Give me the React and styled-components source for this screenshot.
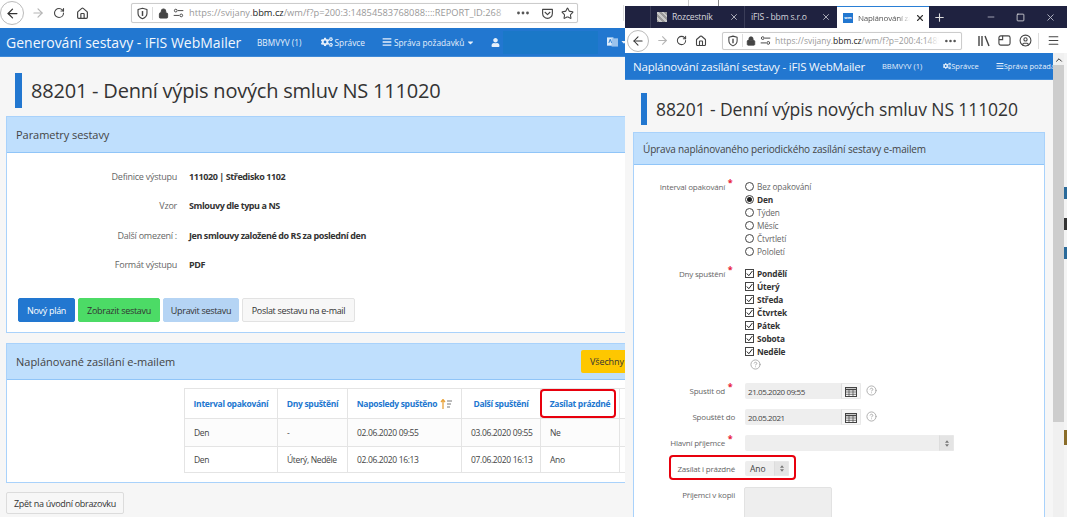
import React from "react";
import styled, { createGlobalStyle } from "styled-components";
import { ArrowLeft, ArrowRight, RotateCw, House, Lock, Star, Minus, Plus, X, Square, Menu, CircleHelp, CircleUser, ChevronUp } from "lucide-react";
import { FaCogs, FaBars, FaUser, FaCaretDown } from "react-icons/fa";

const Global = createGlobalStyle`
  html, body { margin: 0; padding: 0; background: #fff; }
  body { font-family: "Open Sans", "Noto Sans", sans-serif; color: #333; overflow: hidden; }
  * { box-sizing: border-box; }
`;

const Desktop = styled.div`display: flex; width: 1067px; height: 517px; overflow: hidden;`;
const Win = styled.section`
  position: relative; width: ${p => p.$w}px; flex: none; height: 517px; overflow: hidden; display: flex; flex-direction: column; background: #fff;
`;
const TopStrip = styled.div`
  height: 6px; flex: none; display: flex; padding-left: 63px; gap: 29px; background: #fff;
  i { width: 1px; height: 6px; background: #888; }
  i:first-child { background: #ccc; }
`;
const TabBar = styled.div`height: 22px; flex: none; display: flex; background: #1f2240; color: #ddd; font-size: 9px; padding-left: 25px; align-items: stretch;`;
const Tab = styled.div`
  width: ${p => p.$w}px; flex: none; display: flex; align-items: center; gap: 5px; padding-left: ${p => p.$pl}px; position: relative;
  border-left: ${p => p.$active ? 0 : "1px solid #3a3d58"};
  background: ${p => p.$active ? "#fff" : "transparent"};
  color: ${p => p.$active ? "#555" : "#d5d6dd"};
  border-top: ${p => p.$active ? "1px solid #2a7fd5" : 0};
  white-space: nowrap; overflow: hidden;
  letter-spacing: -0.2px; font-size: ${p => p.$active ? 8 : 8.6}px;
`;
const TabLabel = styled.span`
  overflow: hidden; width: ${p => p.$w}px; flex: none;
  mask-image: linear-gradient(to right, #000 78%, transparent);
`;
const TabClose = styled.span`margin-left: auto; margin-right: ${p => p.$mr}px; display: flex; color: ${p => p.$active ? "#333" : "#c5c6d0"};`;
const GreyFav = styled.span`
  width: 10px; height: 10px; flex: none; background: #aaa repeating-linear-gradient(45deg, #999 0 2px, #c8c8c8 2px 4px);
`;
const BlueFav = styled.span`
  width: 10px; height: 10px; flex: none; background: #2277d0; color: #fff; font-size: 4px; font-weight: 700; line-height: 10px; text-align: center; letter-spacing: 0;
`;
const WinCtl = styled.div`display: flex; align-items: center; margin-left: 4px; height: 100%;`;
const CtlBtn = styled.span`width: ${p => p.$w}px; margin-left: ${p => p.$ml || 0}px; display: flex; justify-content: center; color: ${p => p.$c || "#b8bac8"};`;

const Toolbar = styled.div`
  height: ${p => p.$h}px; flex: none; display: flex; align-items: center; background: #fff; color: #444; padding-bottom: ${p => p.$pb || 0}px;
`;
const BackBtn = styled.span`
  width: ${p => p.$s}px; height: ${p => p.$s}px; flex: none; border: 1px solid #bbb; border-radius: 50%; display: flex; align-items: center; justify-content: center; color: #333; margin-left: ${p => p.$ml}px; background: #fff;
`;
const Tool = styled.span`display: flex; flex: none; justify-content: center; width: ${p => p.$w}px; margin-left: ${p => p.$ml || 0}px; color: ${p => p.$c || "#444"};`;
const UrlBar = styled.div`
  display: flex; align-items: center; flex: none; width: ${p => p.$w}px; height: ${p => p.$h}px; margin-left: ${p => p.$ml}px;
  border: 1px solid #ccc; border-radius: 2px; background: #fff; box-shadow: 0 0 1px #ddd;
`;
const UrlDivider = styled.i`width: 1px; height: 13px; background: #ddd; flex: none;`;
const UrlText = styled.div`
  flex: 1; min-width: 0; margin-left: ${p => p.$ml}px; overflow: hidden; white-space: nowrap; font-size: ${p => p.$fs}px; color: #999; position: relative; line-height: 14px;
  b { font-weight: 400; color: #222; }
  &::after { content: ""; position: absolute; right: 0; top: 0; bottom: 0; width: 14px; background: linear-gradient(to right, transparent, #fff); }
`;
const ToolRule = styled.i`width: 1px; height: 16px; background: #ddd; flex: none; margin-left: ${p => p.$ml}px;`;

const Nav = styled.nav`
  height: ${p => p.$h}px; flex: none; display: flex; align-items: center; background: #2277d0; color: #fff; font-size: ${p => p.$fs}px; white-space: nowrap; overflow: hidden; padding-left: ${p => p.$pl}px; border-bottom: 1px solid #3f8ad8;
`;
const Brand = styled.div`font-size: ${p => p.$fs}px; letter-spacing: ${p => p.$ls || 0}px; color: #f2f7fd; width: ${p => p.$w}px; flex: none; white-space: nowrap;`;
const NavItem = styled.div`display: flex; align-items: center; gap: ${p => p.$gap ?? 2}px; flex: none; margin-left: ${p => p.$ml}px; color: #e6f0fb;`;
const Redaction = styled.div`width: 95px; height: 23px; flex: none; background: #1a78c8; margin-left: 3px;`;

const Page = styled.main`flex: 1; min-height: 0; background: #f6f6f6; overflow: hidden; padding: ${p => p.$pad};`;
const Heading = styled.h1`
  margin: 0 0 0 ${p => p.$ml}px; font-weight: 400; color: #333; border-left: ${p => p.$bw}px solid #2277d0; height: ${p => p.$h}px; line-height: ${p => p.$h}px; padding-left: ${p => p.$pl}px; font-size: ${p => p.$fs}px; white-space: nowrap; letter-spacing: ${p => p.$ls}px;
`;
const Card = styled.section`
  width: ${p => p.$w}px; background: #fff; border: 1px solid #a9d2fb; margin-top: ${p => p.$mt}px; flex: none;
`;
const CardHead = styled.header`
  height: ${p => p.$h}px; background: #bfdffd; border-bottom: 1px solid #90c5f8; display: flex; align-items: center; padding-left: ${p => p.$pl}px; font-size: ${p => p.$fs}px; color: #444; white-space: nowrap; letter-spacing: ${p => p.$ls || 0}px;
`;
const AllBtn = styled.span`
  margin-left: auto; margin-right: 14px; background: #fec700; border-radius: 2px; height: 23px; width: 70px; display: flex; align-items: center; padding-left: 9px; font-size: 9px; color: #333; letter-spacing: -0.1px;
`;
const ParamBody = styled.div`padding: 9px 11px 10px 11px;`;
const ParamRow = styled.div`display: flex; align-items: center; height: 29.3px; font-size: 9px;`;
const ParamLabel = styled.div`width: 159px; flex: none; text-align: right; color: #666; letter-spacing: -0.25px;`;
const ParamValue = styled.div`margin-left: 12px; font-weight: 700; color: #333; letter-spacing: -0.42px;`;
const BtnRow = styled.div`display: flex; gap: 3px; margin-top: 19px;`;
const Btn = styled.span`
  height: ${p => p.$h || 24}px; width: ${p => p.$w}px; display: flex; align-items: center; justify-content: center; font-size: 9px; border-radius: 2px; letter-spacing: -0.3px;
  background: ${p => p.$bg}; color: ${p => p.$c || "#333"}; border: 1px solid ${p => p.$bd || p.$bg};
`;
const BackLink = styled(Btn)`margin-top: 9px;`;

const TableWrap = styled.div`padding: 8px 0 9px 177px;`;
const Table = styled.table`
  border-collapse: collapse; table-layout: fixed; width: 520px; font-size: 8.5px; background: #fff; color: #444;
  th, td { border: 1px solid #e4e4e4; white-space: nowrap; overflow: hidden; }
  th { height: 30px; color: #2277d0; font-weight: 700; text-align: center; padding: 0; letter-spacing: -0.3px; }
  td { padding: 0 0 0 9px; letter-spacing: -0.35px; }
  tbody tr { height: 28px; background: #fcfcfc; }
  tbody tr:last-child { height: 26px; background: #fff; }
`;
const SortIcon = styled.svg`vertical-align: -2px; margin-left: 3px;`;
const Ring = styled.span`
  position: absolute; border: 2px solid #e8000d; border-radius: 4px; pointer-events: none; left: ${p => p.$l}px; top: ${p => p.$t}px; width: ${p => p.$w}px; height: ${p => p.$h}px;
`;

const ContentRow = styled.div`flex: 1; min-height: 0; display: flex;`;
const Content = styled.div`flex: 1; min-width: 0; display: flex; flex-direction: column;`;
const Scrollbar = styled.div`width: 11px; flex: none; background: #f0f0f0; display: flex; flex-direction: column; align-items: center; color: #333;`;
const ArrowUp = styled(ChevronUp)`margin-top: 2px; flex: none;`;
const Thumb = styled.div`width: 100%; height: 357px; margin-top: 0; background: #cdcdcd;`;
const Sliver = styled.div`
  width: 3px; flex: none; background: linear-gradient(to bottom, #f4f4f4 0 134px, #2a6a9a 134px 146px, #f4f4f4 146px 165px, #333 165px 177px, #f4f4f4 177px 194px, #2a6a9a 194px 206px, #f4f4f4 206px 377px, #8a6d2a 377px 392px, #f4f4f4 392px);
`;

const Form = styled.div`padding: 15px 0 0 0; display: flex; flex-direction: column;`;
const Row = styled.div`display: flex; align-items: flex-start; margin-bottom: ${p => p.$mb ?? 10}px; position: relative;`;
const Label = styled.div`
  width: 111px; flex: none; text-align: right; padding-right: 10px; color: #666; white-space: nowrap; font-size: 8px; letter-spacing: -0.2px; line-height: ${p => p.$lh}px;
`;
const Req = styled.span`display: inline-block; width: 10px; color: #e8203a; font-weight: 700; font-size: 9px; text-align: center; position: relative; top: -4px; line-height: 0;`;
const Stack = styled.div`display: flex; flex-direction: column;`;
const Choice = styled.label`display: flex; align-items: center; height: 13px; gap: 3px; font-size: 8.3px; letter-spacing: -0.15px; color: ${p => p.$on ? "#333" : "#666"}; font-weight: ${p => p.$on ? 700 : 400};`;
const Radio = styled.span`
  width: 9px; height: 9px; flex: none; border: 1px solid #444; border-radius: 50%; background: #fff; display: flex; align-items: center; justify-content: center; margin-top: -1px;
  &::after { content: ""; width: 5px; height: 5px; border-radius: 50%; background: ${p => p.$on ? "#222" : "transparent"}; }
`;
const Check = styled.span`width: 9px; height: 9px; flex: none; border: 1px solid #444; background: #fff; display: flex; margin-top: -1px;`;
const HelpLine = styled.div`height: 13px; display: flex; padding-left: 5px; color: #aaa; align-items: center;`;
const Field = styled.div`
  display: flex; height: ${p => p.$h || 16}px; width: ${p => p.$w}px; background: #eee; border-radius: 2px; color: #444; align-items: center; flex: none; overflow: hidden;
`;
const FieldText = styled.span`flex: 1; padding-left: ${p => p.$pl || 3}px; letter-spacing: ${p => p.$ls ?? -0.4}px; white-space: nowrap; font-size: ${p => p.$fs || 8}px;`;
const Addon = styled.span`
  width: ${p => p.$w}px; height: 100%; flex: none; background: ${p => p.$bg}; display: flex; align-items: center; justify-content: center; color: #555; border: 1px solid #e8e8e8; border-left: 1px solid #ddd;
`;
const Help = styled.span`display: flex; margin-left: 5px; color: #aaa; margin-top: 2px;`;
const TextBox = styled.div`width: 88px; height: 40px; background: #eee; border: 1px solid #e2e2e2; border-radius: 2px; margin-left: -1px;`;

function PocketIcon({ s = 13 }) {
  return <svg width={s} height={s} viewBox="0 0 16 16" fill="none" stroke="currentColor" strokeWidth="1.4"><path d="M2 3h12v5a6 6 0 0 1-12 0z" strokeLinejoin="round" /><path d="M5 6.5l3 2.8 3-2.8" strokeLinecap="round" strokeLinejoin="round" /></svg>;
}
function ShieldIcon({ s = 13 }) {
  return <svg width={s} height={s} viewBox="0 0 16 16" fill="none" stroke="currentColor" strokeWidth="1.4"><path d="M8 1.5l5.5 1.6v4.6c0 3.4-2.6 5.6-5.5 6.8C5.100 13.300 2.500 11.100 2.500 7.700V3.100z" strokeLinejoin="round" /><path d="M8 5v6" strokeWidth="1.8" /></svg>;
}
function PermIcon({ s = 13 }) {
  return <svg width={s} height={s} viewBox="0 0 16 16" fill="none" stroke="currentColor" strokeWidth="1.4"><circle cx="4" cy="4.500" r="2" /><path d="M7 4.500h8M1 11.500h8" /><circle cx="12" cy="11.500" r="2" /></svg>;
}
function LibraryIcon() {
  return <svg width="14" height="14" viewBox="0 0 14 14" fill="none" stroke="currentColor" strokeWidth="1.4"><path d="M2 2v10M5 2v10M8 2l4 10" /></svg>;
}
function SidebarIcon() {
  return <svg width="13" height="13" viewBox="0 0 14 14" fill="none" stroke="currentColor" strokeWidth="1.2"><rect x="1" y="2" width="12" height="10" rx="2" /><path d="M5 2v4H1" /></svg>;
}
function CalIcon() {
  return <svg width="12" height="11" viewBox="0 0 12 11" fill="none" stroke="#444" strokeWidth="1"><rect x=".5" y="1.500" width="11" height="9" /><path d="M.5 3.500h11" strokeWidth="1.600" /><path d="M.5 6h11M.5 8.300h11M4 3.500v7M8 3.500v7" strokeWidth=".7" /></svg>;
}
function Updown() {
  return <svg width="4" height="7" viewBox="0 0 5 8" fill="#777"><path d="M2.500 0L5 3H0zM2.500 8L0 5h5z" /></svg>;
}
function LangIcon() {
  return <svg width="11" height="12" viewBox="0 0 12 12"><rect x="0" y="1" width="7" height="9" fill="#dcebfa" /><rect x="5" y="2" width="7" height="9" fill="#9cc3ec" /><path d="M2 7l1.500-4L5 7" stroke="#2277d0" fill="none" /></svg>;
}
function CheckMark() {
  return <svg width="7" height="7" viewBox="0 0 7 7" fill="none" stroke="#222" strokeWidth="1"><path d="M.8 3.500l2 2.200L6.400 1" /></svg>;
}
function Dots({ w }) {
  return <svg width={w} height="4" viewBox="0 0 12 4" fill="currentColor"><circle cx="1.500" cy="2" r="1.400" /><circle cx="6" cy="2" r="1.400" /><circle cx="10.500" cy="2" r="1.400" /></svg>;
}

function BrowserTools({ left }) {
  return left ? (
    <Toolbar $h={28} $pb={2}>
      <BackBtn $s={24} $ml={0}><ArrowLeft size={15} strokeWidth={2} /></BackBtn>
      <Tool $w={16} $ml={6} $c="#b5b5b5"><ArrowRight size={14} /></Tool>
      <Tool $w={16} $ml={5}><RotateCw size={12} strokeWidth={2.2} /></Tool>
      <Tool $w={16} $ml={7}><House size={13} strokeWidth={2.2} /></Tool>
      <UrlBar $w={447} $h={20} $ml={41}>
        <Tool $w={20}><ShieldIcon /></Tool>
        <UrlDivider />
        <Tool $w={20}><Lock size={11} fill="#444" strokeWidth={2} /></Tool>
        <Tool $w={11}><PermIcon s={12} /></Tool>
        <UrlText $fs={9.3} $ml={5}>https://svijany.<b>bbm.cz</b>/wm/f?p=200:3:14854583768088::::REPORT_ID:268</UrlText>
        <Tool $w={28} $c="#555"><Dots w={12} /></Tool>
        <Tool $w={20}><PocketIcon /></Tool>
        <Tool $w={20}><Star size={13} /></Tool>
      </UrlBar>
      <ToolRule $ml={45} />
    </Toolbar>
  ) : (
    <Toolbar $h={25}>
      <BackBtn $s={22} $ml={2}><ArrowLeft size={14} strokeWidth={1.8} /></BackBtn>
      <Tool $w={16} $ml={5} $c="#b5b5b5"><ArrowRight size={13} /></Tool>
      <Tool $w={14} $ml={4}><RotateCw size={11} strokeWidth={2.2} /></Tool>
      <Tool $w={14} $ml={6}><House size={12} strokeWidth={2.2} /></Tool>
      <UrlBar $w={240} $h={18} $ml={14}>
        <Tool $w={19}><ShieldIcon s={12} /></Tool>
        <UrlDivider />
        <Tool $w={16}><Lock size={10} fill="#444" strokeWidth={2} /></Tool>
        <Tool $w={12}><PermIcon s={11} /></Tool>
        <UrlText $fs={8.5} $ml={4}>https://svijany.<b>bbm.cz</b>/wm/f?p=200:4:14854583768088</UrlText>
        <Tool $w={22} $c="#555"><Dots w={11} /></Tool>
      </UrlBar>
      <Tool $w={16} $ml={14}><LibraryIcon /></Tool>
      <Tool $w={16} $ml={4}><SidebarIcon /></Tool>
      <Tool $w={16} $ml={5}><CircleUser size={13} /></Tool>
      <ToolRule $ml={5} />
      <Tool $w={16} $ml={6}><Menu size={13} /></Tool>
    </Toolbar>
  );
}

function LeftWindow() {
  return (
    <Win $w={625}>
      <BrowserTools left />
      <Nav $h={29} $pl={6} $fs={8.3}>
        <Brand $fs={14} $w={251}>Generování sestavy - iFIS WebMailer</Brand>
        <NavItem $ml={0}>BBMVYV (1)</NavItem>
        <NavItem $ml={19}><FaCogs size={12} />Správce</NavItem>
        <NavItem $ml={17}><FaBars size={10} />Správa požadavků<FaCaretDown size={9} /></NavItem>
        <NavItem $ml={16}><FaUser size={9} /></NavItem>
        <Redaction />
        <NavItem $ml={9}><LangIcon /><FaCaretDown size={8} /></NavItem>
      </Nav>
      <Page $pad="16px 0 0 6px">
        <Heading $ml={9} $bw={7} $h={35} $pl={9} $fs={20} $ls={-0.21}>88201 - Denní výpis nových smluv NS 111020</Heading>
        <Card $w={660} $mt={8}>
          <CardHead $h={36} $pl={9} $fs={11} $ls={-0.05}>Parametry sestavy</CardHead>
          <ParamBody>
            <ParamRow><ParamLabel>Definice výstupu</ParamLabel><ParamValue>111020 | Středisko 1102</ParamValue></ParamRow>
            <ParamRow><ParamLabel>Vzor</ParamLabel><ParamValue>Smlouvy dle typu a NS</ParamValue></ParamRow>
            <ParamRow><ParamLabel>Další omezení :</ParamLabel><ParamValue>Jen smlouvy založené do RS za poslední den</ParamValue></ParamRow>
            <ParamRow><ParamLabel>Formát výstupu</ParamLabel><ParamValue>PDF</ParamValue></ParamRow>
            <BtnRow>
              <Btn $w={57} $bg="#2277d0" $c="#fff">Nový plán</Btn>
              <Btn $w={82} $bg="#4cdb66">Zobrazit sestavu</Btn>
              <Btn $w={76} $bg="#b5d4f4">Upravit sestavu</Btn>
              <Btn $w={113} $bg="#f7f7f7" $bd="#e2e2e2">Poslat sestavu na e-mail</Btn>
            </BtnRow>
          </ParamBody>
        </Card>
        <Card $w={660} $mt={10}>
          <CardHead $h={36} $pl={9} $fs={11}>Naplánované zasílání e-mailem<AllBtn>Všechny</AllBtn></CardHead>
          <TableWrap>
            <Table>
              <colgroup><col width="93" /><col width="70" /><col width="114" /><col width="79" /><col width="79" /><col width="85" /></colgroup>
              <thead>
                <tr>
                  <th>Interval opakování</th>
                  <th>Dny spuštění</th>
                  <th>Naposledy spuštěno<SortIcon width="12" height="10" viewBox="0 0 12 10"><path d="M3 10V1M1 3l2-2.500L5 3" stroke="#e8a33c" strokeWidth="1.300" fill="none" /><path d="M7 2h5M7 5h4M7 8h3" stroke="#777" /></SortIcon></th>
                  <th>Další spuštění</th>
                  <th>Zasílat prázdné</th>
                  <th></th>
                </tr>
              </thead>
              <tbody>
                <tr><td>Den</td><td>-</td><td>02.06.2020 09:55</td><td>03.06.2020 09:55</td><td>Ne</td><td></td></tr>
                <tr><td>Den</td><td>Úterý, Neděle</td><td>02.06.2020 16:13</td><td>07.06.2020 16:13</td><td>Ano</td><td></td></tr>
              </tbody>
            </Table>
          </TableWrap>
        </Card>
        <BackLink $w={118} $h={22} $bg="#f7f7f7" $bd="#dcdcdc">Zpět na úvodní obrazovku</BackLink>
      </Page>
      <Ring $l={540} $t={389} $w={76} $h={29} />
    </Win>
  );
}

const radios = ["Bez opakování", "Den", "Týden", "Měsíc", "Čtvrtletí", "Pololetí"];
const days = ["Pondělí", "Úterý", "Středa", "Čtvrtek", "Pátek", "Sobota", "Neděle"];

function RightWindow() {
  return (
    <Win $w={442}>
      <TopStrip><i /><i /></TopStrip>
      <TabBar>
        <Tab $w={94} $pl={6}><GreyFav />Rozcestník<TabClose $mr={5}><X size={10} /></TabClose></Tab>
        <Tab $w={93} $pl={6}>iFIS - bbm s.r.o<TabClose $mr={6}><X size={10} /></TabClose></Tab>
        <Tab $w={92} $pl={6} $active><BlueFav>wm</BlueFav><TabLabel $w={52}>Naplánování zasílání</TabLabel><TabClose $mr={6} $active><X size={10} strokeWidth={2.6} /></TabClose></Tab>
        <WinCtl>
          <CtlBtn $w={13} $c="#ddd"><Plus size={13} /></CtlBtn>
          <CtlBtn $w={30} $ml={30}><Minus size={10} /></CtlBtn>
          <CtlBtn $w={29} $c="#eee"><Square size={9} /></CtlBtn>
          <CtlBtn $w={30}><X size={11} /></CtlBtn>
        </WinCtl>
      </TabBar>
      <BrowserTools />
      <ContentRow>
        <Content>
          <Nav $h={27} $pl={8} $fs={7.5}>
            <Brand $fs={11.5} $ls={-0.2} $w={249}>Naplánování zasílání sestavy - iFIS WebMailer</Brand>
            <NavItem $ml={0}>BBMVYV (1)</NavItem>
            <NavItem $ml={21} $gap={0}><FaCogs size={8} />Správce</NavItem>
            <NavItem $ml={17} $gap={0}><FaBars size={8} />Správa požadavků</NavItem>
          </Nav>
          <Page $pad="13px 0 0 8px">
            <Heading $ml={8} $bw={6} $h={32} $pl={9} $fs={17.5} $ls={-0.1}>88201 - Denní výpis nových smluv NS 111020</Heading>
            <Card $w={412} $mt={7}>
              <CardHead $h={32} $pl={9} $fs={10} $ls={-0.155}>Úprava naplánovaného periodického zasílání sestavy e-mailem</CardHead>
              <Form>
                <Row $mb={9}>
                  <Label $lh={13}>Interval opakování<Req>*</Req></Label>
                  <Stack>{radios.map(r => <Choice key={r} $on={r === "Den"}><Radio $on={r === "Den"} />{r}</Choice>)}</Stack>
                </Row>
                <Row $mb={12}>
                  <Label $lh={13}>Dny spuštění<Req>*</Req></Label>
                  <Stack>
                    {days.map(d => <Choice key={d} $on><Check><CheckMark /></Check>{d}</Choice>)}
                    <HelpLine><CircleHelp size={11} /></HelpLine>
                  </Stack>
                </Row>
                <Row>
                  <Label $lh={16}>Spustit od<Req>*</Req></Label>
                  <Field $w={116}><FieldText>21.05.2020 09:55</FieldText><Addon $w={20} $bg="#f6f6f6"><CalIcon /></Addon></Field>
                  <Help><CircleHelp size={11} /></Help>
                </Row>
                <Row>
                  <Label $lh={16}>Spouštět do</Label>
                  <Field $w={116}><FieldText>20.05.2021</FieldText><Addon $w={20} $bg="#f6f6f6"><CalIcon /></Addon></Field>
                  <Help><CircleHelp size={11} /></Help>
                </Row>
                <Row>
                  <Label $lh={16}>Hlavní příjemce<Req>*</Req></Label>
                  <Field $w={209}><FieldText></FieldText><Addon $w={15} $bg="#e4e4e4"><Updown /></Addon></Field>
                </Row>
                <Row $mb={11}>
                  <Label $lh={15}>Zasílat i prázdné</Label>
                  <Field $w={44} $h={15}><FieldText $pl={5} $fs={8.5} $ls={-0.1}>Ano</FieldText><Addon $w={15} $bg="#e4e4e4"><Updown /></Addon></Field>
                  <Ring $l={35} $t={-6} $w={127} $h={25} />
                </Row>
                <Row>
                  <Label $lh={16}>Příjemci v kopii</Label>
                  <TextBox />
                </Row>
              </Form>
            </Card>
          </Page>
        </Content>
        <Scrollbar>
          <ArrowUp size={10} strokeWidth={2.4} />
          <Thumb />
        </Scrollbar>
        <Sliver />
      </ContentRow>
    </Win>
  );
}

export default function App() {
  return (
    <>
      <Global />
      <Desktop>
        <LeftWindow />
        <RightWindow />
      </Desktop>
    </>
  );
}
